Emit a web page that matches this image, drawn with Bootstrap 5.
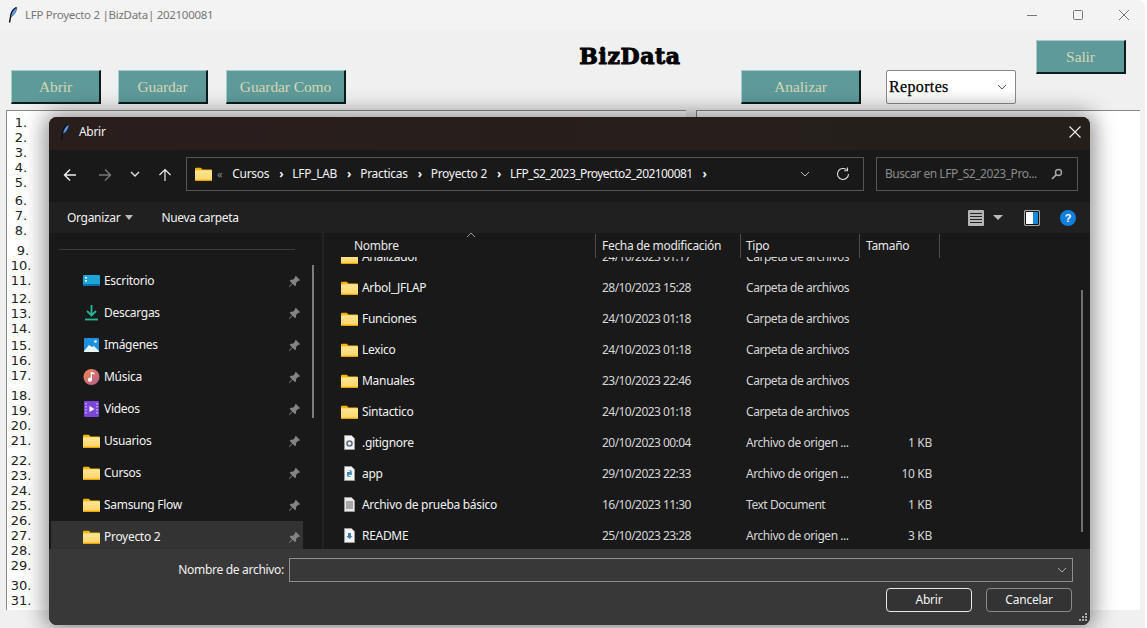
<!DOCTYPE html>
<html lang="es"><head><meta charset="utf-8"><title>LFP Proyecto 2 |BizData| 202100081</title>
<link href="https://cdn.jsdelivr.net/npm/bootstrap@5.3.0/dist/css/bootstrap.min.css" rel="stylesheet">
<style>
html,body{margin:0;height:628px;overflow:hidden;background:#fff}
body{font-family:"Noto Sans","Open Sans",sans-serif;font-size:12px;line-height:16px;letter-spacing:-.3px}
.app-win{position:relative;width:1145px;height:628px;background:#f0f0f0;border-top-right-radius:8px;overflow:hidden}
.app-title{height:30px;background:#f3f3f3;color:#777;padding-left:8px}
.app-title span{margin-left:7px;font-size:11.5px;letter-spacing:-.28px}
.win-ctrls{margin-left:auto;gap:28px;padding-right:14px}
.tool-row{height:80px;padding:0 0 6px 11px}
.tk-btn{width:90px;height:34px;background:#5f9a9a;color:#d4d6b4;border:1px solid;border-color:#a4cccc #0c1c1c #0c1c1c #a4cccc;border-width:1px 2px 2px 1px;font-family:"Liberation Serif",serif;font-size:15.5px;letter-spacing:-.1px;padding:0;border-radius:0}
.tk-wide{width:120px}
.sp-g{margin-left:17px}
.sp-gc{margin-left:18px}
.brand-name{font-family:"DejaVu Serif",serif;font-weight:700;font-size:22px;color:#000;-webkit-text-stroke:1px #000;letter-spacing:.6px;line-height:28px;width:120px;text-align:center;margin:0 0 34px 224px}
.sp-an{margin-left:51px}
.rep-sel{width:130px;height:34px;margin-left:25px;background:linear-gradient(#fff 60%,#f0f0f0);border:1px solid #888;border-radius:2px;font-family:"Liberation Serif",serif;font-size:16px;color:#000;-webkit-text-stroke:.25px #000;padding:0 8px 0 2px;letter-spacing:.35px}
.sp-sal{margin-left:20px;margin-bottom:30px}
.panes{height:500px;padding-left:6px;gap:10px}
.pane-l{width:680px;background:#fff;border-left:1px solid #888;border-top:1px solid #888}
.pane-r{width:444px;background:#fff;border-left:1px solid #888;border-top:1px solid #888}
.nums{width:28px;padding-top:4px;font-family:"DejaVu Sans",sans-serif;font-size:13px;line-height:15px;color:#222;text-align:center;letter-spacing:0}
.g2{margin-top:2px}.g3{margin-top:3px}.g5{margin-top:5px}
.n9{padding-left:4px}

.dlg{position:absolute;left:49px;top:117px;width:1041px;height:508px;background:#191919;color:#f2f2f2;border-radius:8px;overflow:hidden;box-shadow:0 0 22px 4px rgba(0,0,0,.45);z-index:2}
.dlg-title{height:33px;background:linear-gradient(90deg,#2a1e1d,#241f1a);padding:0 0 4px 11px}
.dlg-title span{margin-left:9px}
.dlg-x{margin-left:auto;margin-right:8px}
.dlg-nav{height:52px;padding:7px 12px 11px 5px;background:#191919}
.nav-ic{width:31px;text-align:center;flex:none}
.nav-b{margin-left:4px}
.nav-c{width:26px;margin-left:2px}
.nav-u{width:33px}
.addr{width:678px;height:34px;margin-left:5px;border:1px solid #555;padding:0 8px;background:#191919;flex:none}
.dbl{color:#888;font-size:11px;margin-left:5px;margin-right:1px}
.crumb{margin-left:9px}.crumb-sep{margin-left:10px}
.crumb-long{letter-spacing:-.56px}
.addr-ref{margin:0 5px 0 26px}
.srch{width:202px;height:34px;margin-left:12px;border:1px solid #555;padding:0 14px 0 8px;color:#8b8b8b;flex:none;letter-spacing:-.45px}
.dlg-tools{height:31px;background:#202020;padding:0 14px 0 18px}
.caret-d{width:0;height:0;border:4px solid transparent;border-top:5px solid #bbb;border-bottom:0;display:inline-block;margin-left:5px;vertical-align:2px}
.caret-v{margin-left:9px;border-width:5px;border-bottom:0;vertical-align:0}
.new-f{margin-left:28px;letter-spacing:-.35px}
.ic-pane{margin-left:21px}
.ic-help{margin-left:20px}
.dlg-main{height:316px}
.side{width:275px;flex:none;border-right:2px solid #232323;position:relative;overflow:hidden}
.side-rule{height:1px;background:#3a3a3a;margin:16px 27px 15px 10px}
.side-item{height:32px;margin-left:2px;width:252px;padding-left:32px;padding-right:2px}
.side-item.cur{background:#333}
.side-item svg.main-ic{margin-right:4px;flex:none}
.pin{margin-left:auto;flex:none}
.side-bar{position:absolute;left:263px;top:32px;width:2px;height:153px;background:#7c7c7c}
.files{flex:1;position:relative;min-width:0;overflow:hidden}
.f-head{height:24px;position:relative;background:#191919;z-index:1;color:#e8e8e8}
.fh{position:absolute;top:5px}
.fsep{position:absolute;top:1px;width:1px;height:24px;background:#4b4b4b}
.sort-up{position:absolute;left:142px;top:-1px}
.col-nom{left:30px}.col-fec{left:278px}.col-tip{left:422px}.col-tam{left:542px}
.s1{left:271px}.s2{left:416px}.s3{left:535px}.s4{left:615px}
.f-list{margin-top:-16px}
.f-row{height:31px;padding-left:17px}
.c-n{width:261px;display:flex;align-items:center;flex:none}
.c-n svg{margin-right:4px;flex:none}
.c-d{width:144px;flex:none;color:#d6d6d6;letter-spacing:-.55px}
.c-t{width:114px;flex:none;color:#d6d6d6;letter-spacing:-.45px}
.c-s{width:72px;flex:none;text-align:right;color:#d6d6d6}
.f-bar{position:absolute;left:757px;top:57px;width:2px;height:242px;background:#6e6e6e;z-index:2}
.dlg-foot{height:76px;background:#383838;position:relative;padding:9px 17px 0 0}
.fn-row{justify-content:flex-end}
.fn-input{width:784px;height:24px;border:1px solid #8e8e8e;margin-left:5px;padding-right:5px;background:#383838}
.btn-row{margin-top:6px;justify-content:flex-end;gap:14px;padding-right:1px}
.w-btn{width:86px;height:24px;background:#333;color:#f2f2f2;border:1px solid #8a8a8a;border-radius:4px;font-size:12px;line-height:16px;padding:0;letter-spacing:-.2px}
.w-btn.def{border-color:#e8e8e8}
.grip{position:absolute;right:3px;bottom:3px}
</style></head>
<body>
<svg width="0" height="0" class="position-absolute">
<defs>
<linearGradient id="fg" x1="0" y1="0" x2="0" y2="1"><stop offset="0" stop-color="#ffe596"/><stop offset="1" stop-color="#ffd565"/></linearGradient>
<symbol id="folder" viewBox="0 0 16 13"><path d="M0 1.500a1 1 0 0 1 1-1h4.500L7 2.200h8a1 1 0 0 1 1 1V5H0z" fill="#f5b400"/><path d="M0 4a1 1 0 0 1 1-1h4.500L7 3h8a1 1 0 0 1 1 1v8a1 1 0 0 1-1 1H1a1 1 0 0 1-1-1z" fill="url(#fg)"/><rect y="12" width="16" height="1" rx=".5" fill="#e9a400"/></symbol>
<symbol id="pinic" viewBox="0 0 12 12"><path d="M7.200 .8l4 4-1.200.7-.6-.2-2 2 .1 2-1 1L4.300 8.100 1.300 11 .8 10.500l2.900-3L1.500 5.300l1-1 2 .1 2-2-.2-.6z" fill="#7f8489"/></symbol>
<symbol id="quill" viewBox="0 0 10 16"><path d="M8.500 .5C5 2 2.800 6 2.500 10.500L1.500 15.500" fill="none" stroke="#0a0a14" stroke-width="1.400"/><path d="M9 .5C5.500 2 3.500 5.500 3 10c3.500-2 5.500-5.500 6-9.500z" fill="#5b9be8" stroke="#123" stroke-width=".4"/></symbol>
</defs>
</svg>
<div class="app-win">
  <div class="app-title d-flex align-items-center">
    <svg width="10" height="16"><use href="#quill"/></svg><span>LFP Proyecto 2 |BizData| 202100081</span>
    <div class="win-ctrls d-flex align-items-center">
      <svg width="14" height="14" viewBox="0 0 14 14"><path d="M2 7.500h10" stroke="#777"/></svg>
      <svg width="14" height="14" viewBox="0 0 14 14" class="ms-1"><rect x="2.500" y="2.500" width="9" height="9" rx="1" fill="none" stroke="#777"/></svg>
      <svg width="14" height="14" viewBox="0 0 14 14" class="ms-1"><path d="M2 2l10 10M12 2L2 12" stroke="#777"/></svg>
    </div>
  </div>
  <div class="tool-row d-flex align-items-end">
    <button class="tk-btn">Abrir</button>
    <button class="tk-btn sp-g">Guardar</button>
    <button class="tk-btn tk-wide sp-gc">Guardar Como</button>
    <div class="brand-name">BizData</div>
    <button class="tk-btn tk-wide sp-an">Analizar</button>
    <div class="rep-sel d-flex align-items-center justify-content-between"><span>Reportes</span>
      <svg width="10" height="6" viewBox="0 0 10 6"><path d="M1 1l4 4 4-4" fill="none" stroke="#555"/></svg></div>
    <button class="tk-btn sp-sal">Salir</button>
  </div>
  <div class="panes d-flex">
    <div class="pane-l">
      <div class="nums">
        <div>1.</div><div>2.</div><div>3.</div><div>4.</div><div>5.</div>
        <div class="g3">6.</div><div>7.</div><div>8.</div>
        <div class="g5 n9">9.</div><div>10.</div><div>11.</div>
        <div class="g3">12.</div><div>13.</div><div>14.</div>
        <div class="g2">15.</div><div>16.</div><div>17.</div>
        <div class="g5">18.</div><div>19.</div><div>20.</div><div>21.</div>
        <div class="g5">22.</div><div>23.</div><div>24.</div><div>25.</div><div>26.</div><div>27.</div><div>28.</div><div>29.</div>
        <div class="g5">30.</div><div>31.</div>
      </div>
    </div>
    <div class="pane-r"></div>
  </div>

  <div class="dlg d-flex flex-column">
    <div class="dlg-title d-flex align-items-center">
      <svg width="10" height="16"><use href="#quill"/></svg><span>Abrir</span>
      <svg class="dlg-x" width="14" height="14" viewBox="0 0 14 14"><path d="M1.500 1.500l11 11M12.500 1.500l-11 11" stroke="#eee" stroke-width="1.100"/></svg>
    </div>
    <div class="dlg-nav d-flex align-items-center">
      <div class="nav-ic"><svg width="14" height="14" viewBox="0 0 14 14"><path d="M13 7H1.500M7 1.500L1.500 7 7 12.500" fill="none" stroke="#eee" stroke-width="1.400"/></svg></div>
      <div class="nav-ic nav-b"><svg width="14" height="14" viewBox="0 0 14 14"><path d="M1 7h11.500M7 1.500L12.500 7 7 12.500" fill="none" stroke="#777" stroke-width="1.400"/></svg></div>
      <div class="nav-ic nav-c"><svg width="10" height="7" viewBox="0 0 10 7"><path d="M1 1l4 4 4-4" fill="none" stroke="#ddd" stroke-width="1.500"/></svg></div>
      <div class="nav-ic nav-u"><svg width="14" height="14" viewBox="0 0 14 14"><path d="M7 13V1.500M1.500 7L7 1.500 12.500 7" fill="none" stroke="#eee" stroke-width="1.200"/></svg></div>
      <div class="addr d-flex align-items-center">
        <svg width="17" height="14"><use href="#folder"/></svg>
        <span class="dbl">«</span>
        <span class="crumb">Cursos</span><b class="crumb-sep">›</b>
        <span class="crumb">LFP_LAB</span><b class="crumb-sep">›</b>
        <span class="crumb">Practicas</span><b class="crumb-sep">›</b>
        <span class="crumb">Proyecto 2</span><b class="crumb-sep">›</b>
        <span class="crumb crumb-long">LFP_S2_2023_Proyecto2_202100081</span><b class="crumb-sep">›</b>
        <svg class="ms-auto" width="10" height="6" viewBox="0 0 10 6"><path d="M1 1l4 4 4-4" fill="none" stroke="#bbb"/></svg>
        <svg class="addr-ref" width="14" height="14" viewBox="0 0 14 14"><path d="M12.500 7A5.500 5.500 0 1 1 10.500 2.700M11.500 .5v3.200H8.300" fill="none" stroke="#ddd" stroke-width="1.100"/></svg>
      </div>
      <div class="srch d-flex align-items-center justify-content-between"><span>Buscar en LFP_S2_2023_Pro...</span>
        <svg width="12" height="12" viewBox="0 0 12 12"><circle cx="7.500" cy="4.500" r="3" fill="none" stroke="#aaa" stroke-width="1.400"/><path d="M5.300 6.700L1 11" stroke="#aaa" stroke-width="1.700"/></svg></div>
    </div>
    <div class="dlg-tools d-flex align-items-center">
      <span>Organizar<i class="caret-d"></i></span>
      <span class="new-f">Nueva carpeta</span>
      <svg class="ms-auto" width="16" height="16" viewBox="0 0 16 16"><rect width="16" height="16" rx="1" fill="#b5b5b5"/><path d="M2 3.500h12M2 6.500h12M2 9.500h12M2 12.500h12" stroke="#222" stroke-width="1.100"/></svg>
      <i class="caret-d caret-v"></i>
      <svg class="ic-pane" width="16" height="16" viewBox="0 0 16 16"><rect x=".5" y=".5" width="15" height="15" rx="1" fill="#fff" stroke="#aaa"/><rect x="9" y="2" width="5" height="12" fill="#1a8ae0"/><path d="M1.500 1.500h13v13h-13z" fill="none" stroke="#111"/></svg>
      <svg class="ic-help" width="16" height="16" viewBox="0 0 16 16"><circle cx="8" cy="8" r="8" fill="#0f7fdb"/><text x="8" y="12" text-anchor="middle" font-size="11" font-weight="700" fill="#fff" font-family="Liberation Sans">?</text></svg>
    </div>
    <div class="dlg-main d-flex">
      <div class="side">
        <div class="side-rule"></div>
        <div class="side-item d-flex align-items-center"><svg class="main-ic" width="17" height="14" viewBox="0 0 17 14"><rect y="1" width="17" height="11" rx="1" fill="#1ea5d8"/><rect y="10" width="17" height="2" fill="#0d6fa8"/><path d="M2 3h2v1.500H2zM2 6h2v1.500H2z" fill="#fff"/></svg>Escritorio<svg class="pin" width="13" height="13"><use href="#pinic"/></svg></div>
        <div class="side-item d-flex align-items-center"><svg class="main-ic" width="17" height="16" viewBox="0 0 17 16"><path d="M8.500 0v10M4 6l4.500 4.500L13 6" fill="none" stroke="#27b59a" stroke-width="1.800"/><path d="M2 14.500h13" stroke="#27b59a" stroke-width="1.800"/></svg>Descargas<svg class="pin" width="13" height="13"><use href="#pinic"/></svg></div>
        <div class="side-item d-flex align-items-center"><svg class="main-ic" width="17" height="14" viewBox="0 0 17 14"><rect x="1" width="15" height="14" rx="1" fill="#1f8fe0"/><path d="M1 13l5-6 3 2 2-1 5 5v1H1z" fill="#e8f4fc"/><circle cx="12.500" cy="3.500" r="1.300" fill="#fff"/></svg>Imágenes<svg class="pin" width="13" height="13"><use href="#pinic"/></svg></div>
        <div class="side-item d-flex align-items-center"><svg class="main-ic" width="17" height="16" viewBox="0 0 17 16"><defs><linearGradient id="mg" x1="0" y1="0" x2="1" y2="1"><stop offset="0" stop-color="#ef8a4c"/><stop offset="1" stop-color="#b55a93"/></linearGradient></defs><circle cx="8.500" cy="8" r="8" fill="url(#mg)"/><path d="M9 3v7.500a2 2 0 1 1-1.300-1.700V3z" fill="#fff"/><path d="M9 3l2.500 1v1.500L9 4.800z" fill="#fff"/></svg>Música<svg class="pin" width="13" height="13"><use href="#pinic"/></svg></div>
        <div class="side-item d-flex align-items-center"><svg class="main-ic" width="17" height="16" viewBox="0 0 17 16"><rect x="1" width="15" height="16" rx="1" fill="#7b45d8"/><path d="M3 2v12M14 2v12" stroke="#c9a7f5" stroke-width="1.600" stroke-dasharray="1.500 1.500"/><path d="M6.500 5l5 3-5 3z" fill="#fff"/></svg>Videos<svg class="pin" width="13" height="13"><use href="#pinic"/></svg></div>
        <div class="side-item d-flex align-items-center"><svg class="main-ic" width="17" height="14"><use href="#folder"/></svg>Usuarios<svg class="pin" width="13" height="13"><use href="#pinic"/></svg></div>
        <div class="side-item d-flex align-items-center"><svg class="main-ic" width="17" height="14"><use href="#folder"/></svg>Cursos<svg class="pin" width="13" height="13"><use href="#pinic"/></svg></div>
        <div class="side-item d-flex align-items-center"><svg class="main-ic" width="17" height="14"><use href="#folder"/></svg>Samsung Flow<svg class="pin" width="13" height="13"><use href="#pinic"/></svg></div>
        <div class="side-item cur d-flex align-items-center"><svg class="main-ic" width="17" height="14"><use href="#folder"/></svg>Proyecto 2<svg class="pin" width="13" height="13"><use href="#pinic"/></svg></div>
        <div class="side-bar"></div>
      </div>
      <div class="files">
        <div class="f-head">
          <svg class="sort-up" width="10" height="6" viewBox="0 0 10 6"><path d="M1 5l4-4 4 4" fill="none" stroke="#999"/></svg>
          <span class="fh col-nom">Nombre</span><i class="fsep s1"></i>
          <span class="fh col-fec">Fecha de modificación</span><i class="fsep s2"></i>
          <span class="fh col-tip">Tipo</span><i class="fsep s3"></i>
          <span class="fh col-tam">Tamaño</span><i class="fsep s4"></i>
        </div>
        <div class="f-list">
          <div class="f-row d-flex align-items-center"><div class="c-n"><svg width="17" height="14"><use href="#folder"/></svg>Analizador</div><div class="c-d">24/10/2023 01:17</div><div class="c-t">Carpeta de archivos</div><div class="c-s"></div></div>
          <div class="f-row d-flex align-items-center"><div class="c-n"><svg width="17" height="14"><use href="#folder"/></svg>Arbol_JFLAP</div><div class="c-d">28/10/2023 15:28</div><div class="c-t">Carpeta de archivos</div><div class="c-s"></div></div>
          <div class="f-row d-flex align-items-center"><div class="c-n"><svg width="17" height="14"><use href="#folder"/></svg>Funciones</div><div class="c-d">24/10/2023 01:18</div><div class="c-t">Carpeta de archivos</div><div class="c-s"></div></div>
          <div class="f-row d-flex align-items-center"><div class="c-n"><svg width="17" height="14"><use href="#folder"/></svg>Lexico</div><div class="c-d">24/10/2023 01:18</div><div class="c-t">Carpeta de archivos</div><div class="c-s"></div></div>
          <div class="f-row d-flex align-items-center"><div class="c-n"><svg width="17" height="14"><use href="#folder"/></svg>Manuales</div><div class="c-d">23/10/2023 22:46</div><div class="c-t">Carpeta de archivos</div><div class="c-s"></div></div>
          <div class="f-row d-flex align-items-center"><div class="c-n"><svg width="17" height="14"><use href="#folder"/></svg>Sintactico</div><div class="c-d">24/10/2023 01:18</div><div class="c-t">Carpeta de archivos</div><div class="c-s"></div></div>
          <div class="f-row d-flex align-items-center"><div class="c-n"><svg width="17" height="15" viewBox="0 0 17 15"><path d="M3.500 .5h7l3 3v11h-10z" fill="#f4f4f4" stroke="#999"/><circle cx="8.500" cy="8.500" r="2.500" fill="none" stroke="#5f6f7d" stroke-width="1.600"/></svg>.gitignore</div><div class="c-d">20/10/2023 00:04</div><div class="c-t">Archivo de origen ...</div><div class="c-s">1 KB</div></div>
          <div class="f-row d-flex align-items-center"><div class="c-n"><svg width="17" height="15" viewBox="0 0 17 15"><path d="M3.500 .5h7l3 3v11h-10z" fill="#f4f4f4" stroke="#999"/><path d="M6 6h3V5H7.500v-.5h3V8H7.500v2H6z" fill="#3d7fb5"/><path d="M11 9H8v1h1.500v1h-3V8h3V6H11z" fill="#4e9fc0"/></svg>app</div><div class="c-d">29/10/2023 22:33</div><div class="c-t">Archivo de origen ...</div><div class="c-s">10 KB</div></div>
          <div class="f-row d-flex align-items-center"><div class="c-n"><svg width="17" height="15" viewBox="0 0 17 15"><path d="M3.500 .5h7l3 3v11h-10z" fill="#e9e9e9" stroke="#999"/><path d="M5 5h7M5 7h7M5 9h7M5 11h7" stroke="#666"/></svg>Archivo de prueba básico</div><div class="c-d">16/10/2023 11:30</div><div class="c-t">Text Document</div><div class="c-s">1 KB</div></div>
          <div class="f-row d-flex align-items-center"><div class="c-n"><svg width="17" height="15" viewBox="0 0 17 15"><path d="M3.500 .5h7l3 3v11h-10z" fill="#f4f4f4" stroke="#999"/><path d="M7 5h3v3h1.500l-3 3-3-3H7z" fill="#3d7fb5"/></svg>README</div><div class="c-d">25/10/2023 23:28</div><div class="c-t">Archivo de origen ...</div><div class="c-s">3 KB</div></div>
        </div>
        <div class="f-bar"></div>
      </div>
    </div>
    <div class="dlg-foot">
      <div class="fn-row d-flex align-items-center"><span>Nombre de archivo:</span>
        <div class="fn-input d-flex align-items-center justify-content-end"><svg width="10" height="6" viewBox="0 0 10 6"><path d="M1 1l4 4 4-4" fill="none" stroke="#aaa"/></svg></div></div>
      <div class="btn-row d-flex"><button class="w-btn def">Abrir</button><button class="w-btn">Cancelar</button></div>
      <svg class="grip" width="9" height="9" viewBox="0 0 9 9"><path d="M7 0h2v2H7zM4 3h2v2H4zM7 3h2v2H7zM1 6h2v2H1zM4 6h2v2H4zM7 6h2v2H7z" fill="#aaa"/></svg>
    </div>
  </div>
</div>
</body></html>
